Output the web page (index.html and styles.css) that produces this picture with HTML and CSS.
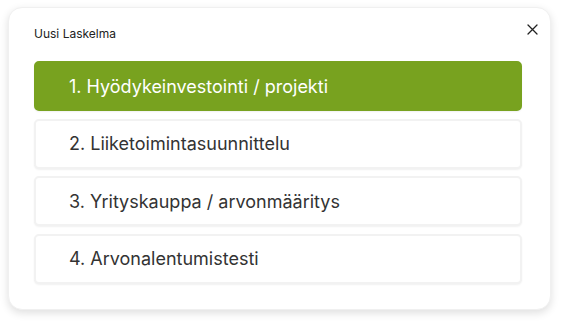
FILE: index.html
```html
<!DOCTYPE html>
<html lang="fi">
<head>
    <meta charset="UTF-8">
    <meta name="viewport" content="width=device-width, initial-scale=1.0">
    <title>Uusi Laskelma</title>
    <link rel="stylesheet" href="styles.css">
</head>
<body>
    <div class="modal">
        <div class="modal-header">
            <h2>Uusi Laskelma</h2>
            <button class="close" aria-label="Sulje">
                <svg width="11" height="11" viewBox="0 0 11 11">
                    <path d="M1 1 L10 10 M10 1 L1 10" stroke="#222" stroke-width="1.3" fill="none" stroke-linecap="round"/>
                </svg>
            </button>
        </div>
        <div class="options">
            <button class="option active">1. Hyödykeinvestointi / projekti</button>
            <button class="option">2. Liiketoimintasuunnittelu</button>
            <button class="option">3. Yrityskauppa / arvonmääritys</button>
            <button class="option">4. Arvonalentumistesti</button>
        </div>
    </div>
</body>
</html>
```

FILE: styles.css
```css
body {
    font-family: Inter, 'Noto Sans', sans-serif;
    margin: 0;
    padding: 7px 14px 15px 8px;
    background: #ffffff;
}
.modal {
    width: 543px;
    height: 303px;
    box-sizing: border-box;
    background: white;
    border-radius: 14px;
    border: 1px solid #f0f0f0;
    box-shadow: 0 3px 8px rgba(0,0,0,0.13);
    padding: 18px 28px 0 25px;
}
.modal-header {
    display: flex;
    justify-content: space-between;
    align-items: flex-start;
    margin-bottom: 20px;
}
.modal-header h2 {
    margin: 0;
    font-size: 12px;
    font-weight: 400;
    line-height: 15px;
    color: #222;
}
.close {
    background: none;
    border: none;
    padding: 0;
    margin: -3px -17px 0 0;
    width: 13px;
    height: 13px;
    cursor: pointer;
}
.options {
    display: flex;
    flex-direction: column;
    gap: 7.5px;
}
.option {
    height: 50px;
    box-sizing: border-box;
    text-align: left;
    padding: 0 0 0 33px;
    font-family: Inter, 'Noto Sans', sans-serif;
    font-size: 18px;
    color: #333;
    background: white;
    border: 2px solid #f2f2f2;
    border-radius: 5px;
    box-shadow: 0 1px 2px rgba(0,0,0,0.06);
    cursor: pointer;
}
.option.active {
    background: #78a21f;
    border-color: #78a21f;
    color: #ffffff;
}
```
